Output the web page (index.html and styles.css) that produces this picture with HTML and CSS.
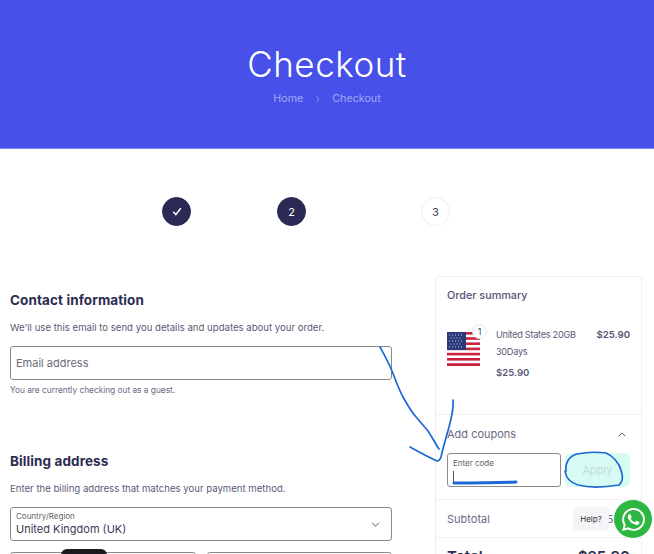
FILE: index.html
```html
<!DOCTYPE html>
<html lang="en">
<head>
    <meta charset="UTF-8">
    <meta name="viewport" content="width=device-width, initial-scale=1.0">
    <title>Checkout</title>
    <link rel="stylesheet" href="styles.css">
</head>
<body>
    <header class="hero">
        <h1>Checkout</h1>
        <div class="crumbs">
            <span>Home</span>
            <svg class="crumb-sep" width="5" height="8" viewBox="0 0 5 8"><path d="M1 .8 4 4 1 7.2"/></svg>
            <span>Checkout</span>
        </div>
    </header>

    <div class="steps">
        <div class="step done">
            <svg width="10" height="9" viewBox="0 0 10 9"><path d="M1.2 4.8 3.8 7.6 8.8 1.2"/></svg>
        </div>
        <div class="step done second">2</div>
        <div class="step third">3</div>
    </div>

    <main class="layout">
        <div class="forms">
            <section class="contact">
                <h2>Contact information</h2>
                <p class="hint">We'll use this email to send you details and updates about your order.</p>
                <div class="field email">Email address</div>
                <p class="guest">You are currently checking out as a guest.</p>
            </section>

            <section class="billing">
                <h2>Billing address</h2>
                <p class="hint">Enter the billing address that matches your payment method.</p>
                <div class="field country">
                    <div>
                        <div class="mini-label">Country/Region</div>
                        <div class="country-name">United Kingdom (UK)</div>
                    </div>
                    <svg class="chevron" width="9" height="5" viewBox="0 0 10 6"><path d="M1 1 5 5 9 1"/></svg>
                </div>
                <div class="name-row">
                    <div class="field half"></div>
                    <div class="field half"></div>
                </div>
            </section>
        </div>

        <aside class="summary">
            <h3>Order summary</h3>
            <div class="item">
                <div class="flag">
                    <svg width="33" height="34" viewBox="0 0 33 34">
                        <rect class="white" width="33" height="34"/>
                        <rect class="red" y="0" width="33" height="2.6"/>
                        <rect class="red" y="5.2" width="33" height="2.6"/>
                        <rect class="red" y="10.4" width="33" height="2.6"/>
                        <rect class="red" y="15.6" width="33" height="2.6"/>
                        <rect class="red" y="20.8" width="33" height="2.6"/>
                        <rect class="red" y="26" width="33" height="2.6"/>
                        <rect class="red" y="31.2" width="33" height="2.8"/>
                        <rect class="navy" width="19" height="18"/>
                        <path class="stars" d="M2 3h15M3.5 6h12M2 9h15M3.5 12h12M2 15h15"/>
                    </svg>
                    <span class="qty">1</span>
                </div>
                <div class="item-info">
                    <div class="item-name">United States 20GB 30Days</div>
                    <div class="item-unit">$25.90</div>
                </div>
                <div class="item-price">$25.90</div>
            </div>

            <div class="coupons">
                <div class="coupons-head">
                    <span>Add coupons</span>
                    <svg class="chevron" width="8" height="5" viewBox="0 0 10 6"><path d="M1 5 5 1 9 5"/></svg>
                </div>
                <div class="coupon-row">
                    <div class="field code">
                        <div class="mini-label">Enter code</div>
                        <div class="caret"></div>
                    </div>
                    <button class="apply">Apply</button>
                </div>
            </div>

            <div class="line">
                <span>Subtotal</span>
                <span>$25.90</span>
            </div>
            <div class="line total">
                <span>Total</span>
                <span>$25.90</span>
            </div>
        </aside>
    </main>

    <!-- marks drawn on top of the screenshot -->
    <svg class="scribble" width="654" height="554" viewBox="0 0 654 554">
        <path d="M380 347C385 356 389 363 392 371C396 381 399 390 403 397C408 406 412 413 417 418C421 423 424 426 428 431C432 437 435 443 439 449"/>
        <path d="M410 447C419 452 428 457 437 461C439 461 440 460 441 457C443 448 446 438 449 427C451 418 454 410 453 400"/>
        <path class="thick" d="M454 483C474 483 495 483 516 482"/>
        <path d="M566 471C565 463 569 456 577 454C587 452 598 452 606 453C613 456 619 463 621 470C623 476 623 482 619 485C607 487 590 488 578 485C571 483 566 478 565 471"/>
    </svg>

    <div class="tooltip-edge"></div>
    <div class="help">Help?</div>
    <div class="whatsapp">
        <svg width="23" height="23" viewBox="0 0 24 24"><path d="M17.472 14.382c-.297-.149-1.758-.867-2.03-.967-.273-.099-.471-.148-.67.15-.197.297-.767.966-.94 1.164-.173.199-.347.223-.644.075-.297-.15-1.255-.463-2.39-1.475-.883-.788-1.48-1.761-1.653-2.059-.173-.297-.018-.458.13-.606.134-.133.298-.347.446-.52.149-.174.198-.298.298-.497.099-.198.05-.371-.025-.52-.075-.149-.669-1.612-.916-2.207-.242-.579-.487-.5-.669-.51-.173-.008-.371-.01-.57-.01-.198 0-.52.074-.792.372-.272.297-1.04 1.016-1.04 2.479 0 1.462 1.065 2.875 1.213 3.074.149.198 2.096 3.2 5.077 4.487.709.306 1.262.489 1.694.625.712.227 1.36.195 1.871.118.571-.085 1.758-.719 2.006-1.413.248-.694.248-1.289.173-1.413-.074-.124-.272-.198-.57-.347m-5.421 7.403h-.004a9.87 9.87 0 01-5.031-1.378l-.361-.214-3.741.982.998-3.648-.235-.374a9.86 9.86 0 01-1.51-5.26c.001-5.45 4.436-9.884 9.888-9.884 2.64 0 5.122 1.03 6.988 2.898a9.825 9.825 0 012.893 6.994c-.003 5.45-4.437 9.884-9.885 9.884m8.413-18.297A11.815 11.815 0 0012.05 0C5.495 0 .16 5.335.157 11.892c0 2.096.547 4.142 1.588 5.945L.057 24l6.305-1.654a11.882 11.882 0 005.683 1.448h.005c6.554 0 11.89-5.335 11.893-11.893a11.821 11.821 0 00-3.48-8.413z"/></svg>
    </div>
</body>
</html>
```

FILE: styles.css
```css
html, body {
    height: 100%;
    overflow: hidden;
}

body {
    margin: 0;
    font-family: Inter, "Liberation Sans", sans-serif;
    color: #55546f;
    background-color: #fff;
}

.hero {
    height: 148px;
    background-color: #4750e8;
    border-bottom: 1px solid #7c84f2;
    text-align: center;
    color: #fff;
    overflow: hidden;
}

.hero h1 {
    margin: 44px 0 0;
    font-size: 35px;
    line-height: 40px;
    font-weight: 300;
    letter-spacing: 0.5px;
}

.crumbs {
    display: flex;
    justify-content: center;
    align-items: center;
    gap: 12px;
    margin-top: 8px;
    font-size: 10.7px;
    line-height: 14px;
    color: #a3a8f5;
}

.crumb-sep path {
    fill: none;
    stroke: #8b91f1;
    stroke-width: 1;
}

.steps {
    display: flex;
    padding: 48px 0 0 162px;
}

.step {
    display: flex;
    justify-content: center;
    align-items: center;
    width: 29px;
    height: 29px;
    box-sizing: border-box;
    border: 1px solid #f0f0f3;
    border-radius: 50%;
    font-size: 11px;
    color: #44435c;
}

.step.done {
    background-color: #2a2a55;
    border-color: #2a2a55;
    color: #fff;
}

.step svg path {
    fill: none;
    stroke: #fff;
    stroke-width: 1.5;
}

.step.second {
    margin-left: 86px;
}

.step.third {
    margin-left: 115px;
}

.layout {
    display: flex;
    align-items: flex-start;
    padding: 50px 12px 0 10px;
}

.forms {
    width: 382px;
    margin-right: 43px;
}

.forms h2 {
    margin: 0;
    font-size: 13.5px;
    line-height: 18px;
    font-weight: 700;
    letter-spacing: 0.1px;
    color: #2d2c52;
}

.contact {
    padding-top: 15px;
}

.billing {
    margin-top: 56px;
}

.hint {
    margin: 11px 0 0;
    font-size: 9.6px;
    line-height: 16px;
    color: #5b5a75;
}

.field {
    box-sizing: border-box;
    border: 1px solid #8a8a8a;
    border-radius: 3px;
    background-color: #fff;
}

.email {
    height: 34px;
    margin-top: 10px;
    padding-left: 5px;
    font-size: 11px;
    line-height: 32px;
    color: #6b6b75;
}

.guest {
    margin: 4px 0 0;
    font-size: 8.3px;
    line-height: 12px;
    color: #6a6880;
}

.country {
    display: flex;
    justify-content: space-between;
    align-items: center;
    height: 34px;
    margin-top: 10px;
    padding: 0 11px 0 5px;
}

.mini-label {
    font-size: 8px;
    line-height: 11px;
    color: #5f5f68;
}

.country-name {
    font-size: 11px;
    line-height: 15px;
    color: #3b3a55;
}

.chevron path {
    fill: none;
    stroke: #55546f;
    stroke-width: 1.2;
}

.name-row {
    display: flex;
    gap: 11px;
    margin-top: 11px;
}

.half {
    flex: 1;
    height: 34px;
}

.summary {
    width: 207px;
    box-sizing: border-box;
    border: 1px solid #efeff2;
    border-radius: 4px;
}

.summary h3 {
    margin: 0;
    padding: 12px 11px 0;
    font-size: 10.8px;
    line-height: 14px;
    font-weight: 500;
    color: #55546f;
}

.item {
    display: flex;
    padding: 23px 11px 0;
    height: 88px;
    border-bottom: 1px solid #f1f1f4;
}

.flag {
    position: relative;
    width: 33px;
    height: 34px;
    margin-top: 6px;
}

.flag .white { fill: #fff; }
.flag .red { fill: #c8223f; }
.flag .navy { fill: #2a3a7a; }

.flag .stars {
    fill: none;
    stroke: #c6cbe4;
    stroke-width: 1;
    stroke-dasharray: 1 2;
}

.qty {
    position: absolute;
    top: -8px;
    right: -7px;
    width: 13px;
    height: 13px;
    border: 1px solid #e6e6e9;
    border-radius: 50%;
    background-color: #fff;
    text-align: center;
    font-size: 9px;
    line-height: 13px;
    color: #44435c;
}

.item-info {
    width: 88px;
    margin-left: 16px;
    font-size: 9.2px;
    line-height: 17px;
    letter-spacing: -0.3px;
    color: #5b5a75;
}

.item-unit {
    margin-top: 4px;
    font-size: 9.6px;
    font-weight: 600;
    letter-spacing: 0;
}

.item-price {
    margin-left: auto;
    font-size: 9.6px;
    line-height: 17px;
    font-weight: 600;
}

.coupons {
    padding: 12px 11px 12px;
    border-bottom: 1px solid #f1f1f4;
}

.coupons-head {
    display: flex;
    justify-content: space-between;
    align-items: center;
    padding-right: 4px;
    font-size: 11px;
    line-height: 14px;
    color: #6a6980;
}

.coupon-row {
    display: flex;
    justify-content: space-between;
    margin-top: 12px;
}

.code {
    width: 114px;
    height: 34px;
    padding: 4px 5px;
}

.caret {
    width: 1px;
    height: 13px;
    margin-top: 2px;
    background-color: #55546f;
}

.apply {
    width: 65px;
    height: 34px;
    border: none;
    border-radius: 6px;
    background-color: #d5fbf3;
    font-family: inherit;
    font-size: 11px;
    color: #c9dcd8;
}

.line {
    display: flex;
    justify-content: space-between;
    align-items: center;
    height: 37px;
    padding: 0 11px;
    border-bottom: 1px solid #f1f1f4;
    font-size: 11px;
    color: #6a6980;
}

.total {
    border-bottom: none;
    font-size: 15px;
    font-weight: 600;
    color: #2d2c52;
}

.scribble {
    position: absolute;
    top: 0;
    left: 0;
    pointer-events: none;
}

.scribble path {
    fill: none;
    stroke: #1c67d6;
    stroke-width: 1.7;
    stroke-linecap: round;
}

.scribble .thick {
    stroke-width: 3;
}

.tooltip-edge {
    position: fixed;
    left: 61px;
    top: 549px;
    width: 46px;
    height: 12px;
    border-radius: 6px;
    background-color: #1b1b1f;
}

.help {
    position: fixed;
    left: 573px;
    top: 507px;
    width: 36px;
    height: 24px;
    border-radius: 3px;
    background-color: #f5f5f7;
    text-align: center;
    font-size: 8px;
    line-height: 24px;
    color: #33333a;
}

.whatsapp {
    position: fixed;
    left: 614px;
    top: 500px;
    display: flex;
    justify-content: center;
    align-items: center;
    width: 38px;
    height: 38px;
    border-radius: 50%;
    background-color: #2db742;
}

.whatsapp svg {
    fill: #fff;
}
```
